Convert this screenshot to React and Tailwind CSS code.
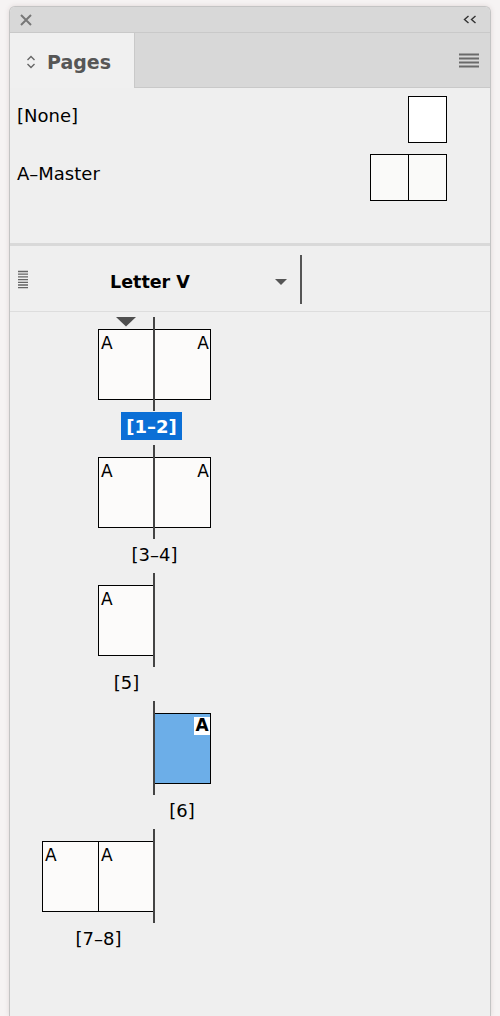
const font = { fontFamily: '"DejaVu Sans", "Liberation Sans", sans-serif' }

function Page({ w = 'w-[56px]', sides, blue, a }) {
  return (
    <div className={`relative h-[71px] ${w} border-black ${sides} ${blue ? 'bg-[#6caee8]' : 'bg-[#fcfbfa]'}`}>
      {a === 'left' && (
        <span className="absolute left-[2px] top-[5px] text-[17px] leading-none text-black">A</span>
      )}
      {a === 'right' && (
        <span className="absolute right-[1px] top-[5px] text-[17px] leading-none text-black">A</span>
      )}
      {a === 'boxed' && (
        <span className="absolute right-0 top-[3px] flex h-[18px] w-[16px] items-center justify-center bg-white text-[17px] font-bold leading-none text-black">A</span>
      )}
    </div>
  )
}

function Spread({ ml, left, right, label, selected, marker }) {
  return (
    <div className={`relative flex w-fit flex-col items-center ${ml}`}>
      {marker && (
        <svg className="absolute left-[18px] top-0" width="20" height="10" viewBox="0 0 20 10">
          <path d="M0 0H20L10 9.5Z" fill="#4f4f4f" />
        </svg>
      )}
      <div className="flex items-center">
        {left}
        <div className="h-[94px] w-[2px] bg-[#444]" />
        {right}
      </div>
      <div className="mb-[5px] mt-[1px] flex h-[28px] items-center justify-center">
        <span className={selected ? 'mr-[6px] flex h-[28px] items-center bg-[#0b6fd6] px-[5px] text-[18px] font-bold text-white' : 'text-[18px] text-black'}>
          {label}
        </span>
      </div>
    </div>
  )
}

export default function App() {
  return (
    <div className="min-h-[1016px] bg-[#f6f3f3] px-[9px] pt-[6px]" style={font}>
      <div className="flex min-h-[1010px] flex-col overflow-hidden rounded-t-[6px] border border-b-0 border-[#c4c4c4] bg-[#efefef] shadow-[0_0_5px_rgba(120,90,90,0.18)]">
        {/* title bar */}
        <div className="flex h-[26px] items-center justify-between border-b border-[#c9c9c9] bg-[#d8d8d8] pl-[10px] pr-[13px]">
          <svg width="12" height="12" viewBox="0 0 12 12">
            <path d="M1 1L11 11M11 1L1 11" stroke="#777" strokeWidth="2" />
          </svg>
          <svg width="14" height="9" viewBox="0 0 14 9">
            <path d="M5.5 1L1.5 4.5L5.5 8M12.5 1L8.5 4.5L12.5 8" stroke="#333" strokeWidth="1.4" fill="none" />
          </svg>
        </div>

        {/* tab row */}
        <div className="flex h-[55px]">
          <div className="flex w-[125px] items-center border-r border-[#c9c9c9] bg-[#f0f0f0] pl-[16px] pt-[3px]">
            <svg width="10" height="16" viewBox="0 0 10 16">
              <path d="M1.5 6L5 2.5L8.5 6M1.5 10L5 13.5L8.5 10" stroke="#666" strokeWidth="1.4" fill="none" />
            </svg>
            <span className="ml-[11px] text-[19px] font-bold text-[#565656]">Pages</span>
          </div>
          <div className="flex flex-1 items-center justify-end border-b border-[#c9c9c9] bg-[#d8d8d8] pr-[11px]">
            <svg width="20" height="15" viewBox="0 0 20 15">
              <path d="M0 1.5H20M0 5.5H20M0 9.5H20M0 13.5H20" stroke="#6a6a6a" strokeWidth="1.8" />
            </svg>
          </div>
        </div>

        {/* masters */}
        <div className="flex h-[155px] flex-col gap-[11px] pl-[7px] pr-[43px] pt-[8px]">
          <div className="flex h-[47px] items-center justify-between">
            <span className="mb-[8px] text-[18px] text-black">[None]</span>
            <div className="h-[47px] w-[39px] border border-black bg-white" />
          </div>
          <div className="flex h-[47px] items-center justify-between">
            <span className="mb-[8px] text-[18px] text-black">A–Master</span>
            <div className="flex h-[47px] border border-black bg-[#fafaf9]">
              <div className="w-[38px] border-r border-black" />
              <div className="w-[37px]" />
            </div>
          </div>
        </div>

        <div className="h-[3px] bg-[#d9d9d9]" />

        {/* toolbar */}
        <div className="flex h-[66px] items-center border-b border-[#dddddd] pl-[8px] pt-[2px]">
          <div className="flex w-[279px] items-center">
            <svg width="10" height="19" viewBox="0 0 10 19">
              <path d="M0 1.5H10M0 4.2H10M0 6.9H10M0 9.6H10M0 12.3H10M0 15H10M0 17.7H10" stroke="#666" strokeWidth="1.3" />
            </svg>
            <span className="ml-[82px] mt-[6px] text-[17.5px] font-bold text-black">Letter V</span>
            <svg className="ml-auto mr-[10px] mt-[4px]" width="12" height="6" viewBox="0 0 12 6">
              <path d="M0 0H12L6 6Z" fill="#555" />
            </svg>
          </div>
          <div className="ml-[3px] h-[49px] w-[2px] bg-[#555]" />
        </div>

        {/* pages */}
        <div className="flex flex-col items-start pt-[5px]">
          <Spread
            ml="ml-[88px]"
            marker
            selected
            label="[1–2]"
            left={<Page w="w-[55px]" sides="border-y border-l" a="left" />}
            right={<Page sides="border-y border-r" a="right" />}
          />
          <Spread
            ml="ml-[88px]"
            label="[3–4]"
            left={<Page w="w-[55px]" sides="border-y border-l" a="left" />}
            right={<Page sides="border-y border-r" a="right" />}
          />
          <Spread
            ml="ml-[88px]"
            label="[5]"
            left={<Page w="w-[55px]" sides="border-y border-l" a="left" />}
          />
          <Spread
            ml="ml-[143px]"
            label="[6]"
            right={<Page sides="border-y border-r" blue a="boxed" />}
          />
          <Spread
            ml="ml-[32px]"
            label="[7–8]"
            left={
              <>
                <Page sides="border-y border-l" a="left" />
                <Page w="w-[55px]" sides="border-y border-l" a="left" />
              </>
            }
          />
        </div>
      </div>
    </div>
  )
}
